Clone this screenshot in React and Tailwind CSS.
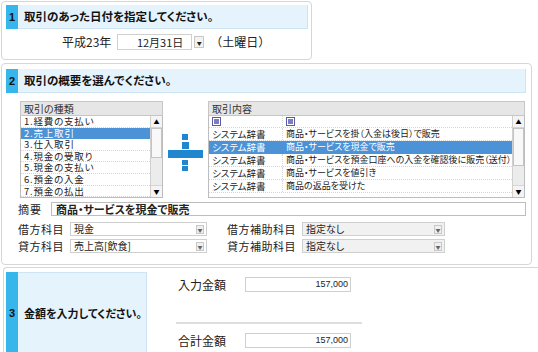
import React from 'react';

const kinds = ['1.経費の支払い', '2.売上取引', '3.仕入取引', '4.現金の受取り', '5.現金の支払い', '6.預金の入金', '7.預金の払出'];

const contents = [
  ['システム辞書', '商品・サービスを掛（入金は後日）で販売'],
  ['システム辞書', '商品・サービスを現金で販売'],
  ['システム辞書', '商品・サービスを預金口座への入金を確認後に販売（送付）'],
  ['システム辞書', '商品・サービスを値引き'],
  ['システム辞書', '商品の返品を受けた'],
];

function Header({ n, text }) {
  return (
    <div className="flex h-[24px]">
      <div className="w-[12px] bg-[#36b6ea] flex items-center justify-center text-[11px] font-bold text-[#111] font-['Liberation_Sans',sans-serif]">{n}</div>
      <div className="flex-1 bg-[#e5f3fc] border-b border-r border-[#cfe4f2] flex items-center pl-[6px] text-[11.5px] font-bold text-[#111] whitespace-nowrap">{text}</div>
    </div>
  );
}

function ScrollBar({ thumbH }) {
  return (
    <div className="w-[12px] h-full flex flex-col bg-[#ececec] border-l border-[#d0d0d0]">
      <div className="h-[12px] flex items-center justify-center bg-[#f4f4f4] border-b border-[#d6d6d6] text-[6px] leading-none text-black">▲</div>
      <div className="flex-1 flex flex-col">
        <div className="bg-[#f8f8f8] border border-[#c4c4c4]" style={{ height: thumbH }} />
      </div>
      <div className="h-[12px] flex items-center justify-center bg-[#f4f4f4] border-t border-[#d6d6d6] text-[6px] leading-none text-black">▼</div>
    </div>
  );
}

function Check() {
  return (
    <span className="inline-flex w-[9px] h-[9px] border border-[#5a5aa8] bg-white items-center justify-center">
      <span className="w-[5px] h-[5px] bg-[#7b7bc6]" />
    </span>
  );
}

function Select({ value, gray, width }) {
  return (
    <div className={`h-[14px] border border-[#cfcfcf] flex items-center justify-between pl-[3px] pr-[2px] text-[10px] leading-none text-[#222] ${gray ? 'bg-[#f1f1f1]' : 'bg-white'}`} style={{ width }}>
      <span className="whitespace-nowrap">{value}</span>
      <span className="w-[8px] h-[9px] border border-[#c8c8c8] bg-[#f0f0f0] text-[5px] leading-none flex items-center justify-center text-[#666]">▼</span>
    </div>
  );
}

function PlusIcon() {
  return (
    <svg width="36" height="38" viewBox="0 0 36 38">
      <g fill="#1f86cf">
        <rect x="14" y="1" width="6" height="6" />
        <rect x="14" y="9" width="7" height="7" />
        <rect x="0" y="17" width="35" height="8" />
        <rect x="14" y="27" width="6" height="5" />
        <rect x="14" y="33" width="6" height="5" />
      </g>
    </svg>
  );
}

export default function App() {
  return (
    <div className="w-[538px] h-[352px] overflow-hidden bg-white font-['Noto_Sans_CJK_JP','Liberation_Sans',sans-serif] [font-feature-settings:'palt'] text-[#222]">
      {/* 1 */}
      <div className="ml-[1px] mt-[1px] w-[311px] h-[59px] border border-[#d6d6d6] rounded-[4px] pt-[3px] pl-[4px] pr-[3px]">
        <Header n="1" text="取引のあった日付を指定してください。" />
        <div className="mt-[4px] h-[18px] flex items-center pl-[56px] text-[12px] whitespace-nowrap">
          <span>平成23年</span>
          <div className="ml-[6px] w-[75px] h-[16px] border border-[#d0d0d0] flex items-center justify-end pr-[8px] text-[11px]">12月31日</div>
          <div className="ml-[2px] w-[10px] h-[12px] border border-[#c8c8c8] bg-[#f2f2f2] text-[5px] leading-none flex items-center justify-center">▼</div>
          <span className="ml-[6px] [font-feature-settings:normal]">（土曜日）</span>
        </div>
      </div>

      {/* 2 */}
      <div className="ml-[1px] mt-[3px] w-[531px] h-[202px] border border-[#d6d6d6] rounded-[4px] pt-[5px] pl-[4px] pr-[5px]">
        <Header n="2" text="取引の概要を選んでください。" />
        <div className="mt-[8px] flex">
          <div className="ml-[14px] w-[143px]">
            <div className="h-[15px] bg-[#e6e6e6] border border-[#c6c6c6] pl-[3px] text-[10px] leading-[13px] text-[#333]">取引の種類</div>
            <div className="h-[82px] border border-t-0 border-[#bdbdbd] flex overflow-hidden">
              <div className="flex-1">
                {kinds.map((k, i) => (
                  <div key={k} className={`h-[11.6px] leading-[11px] pl-[3px] text-[9.5px] tracking-[0.8px] whitespace-nowrap border-b border-dotted ${i === 1 ? 'bg-[#4b92d6] text-white border-[#4b92d6]' : 'border-[#d4d4d4]'}`}>{k}</div>
                ))}
              </div>
              <ScrollBar thumbH={30} />
            </div>
          </div>
          <div className="w-[45px] flex items-center justify-center pt-[4px]">
            <PlusIcon />
          </div>
          <div className="w-[317px]">
            <div className="h-[15px] bg-[#e6e6e6] border border-[#c6c6c6] pl-[3px] text-[10px] leading-[13px] text-[#333]">取引内容</div>
            <div className="h-[82px] border border-t-0 border-[#bdbdbd] flex overflow-hidden">
              <div className="flex-1 overflow-hidden">
                <div className="h-[12px] flex border-b border-dotted border-[#d4d4d4]">
                  <div className="w-[74px] pl-[3px] flex items-center border-r border-dotted border-[#d4d4d4]"><Check /></div>
                  <div className="flex-1 pl-[3px] flex items-center"><Check /></div>
                </div>
                {contents.map(([a, b], i) => (
                  <div key={b} className={`h-[13px] flex text-[9px] leading-[12px] border-b border-dotted ${i === 1 ? 'bg-[#4b92d6] text-white border-[#4b92d6]' : 'border-[#d4d4d4]'}`}>
                    <div className={`w-[74px] pl-[3px] border-r border-dotted whitespace-nowrap text-[9.5px] ${i === 1 ? 'border-[#4b92d6]' : 'border-[#d4d4d4]'}`}>{a}</div>
                    <div className="flex-1 pl-[3px] whitespace-nowrap overflow-hidden">{b}</div>
                  </div>
                ))}
              </div>
              <ScrollBar thumbH={38} />
            </div>
          </div>
        </div>

        <div className="mt-[4px] h-[14px] flex items-center">
          <span className="ml-[12px] w-[33px] text-[11px] tracking-[1px]">摘要</span>
          <div className="w-[476px] h-[14px] border border-[#bdbdbd] pl-[4px] text-[11px] leading-[12px] font-bold whitespace-nowrap">商品・サービスを現金で販売</div>
        </div>

        <div className="mt-[6px] flex flex-col gap-[3px]">
          {[['借方科目', '現金', '借方補助科目'], ['貸方科目', '売上高[飲食]', '貸方補助科目']].map(([l, v, l2]) => (
            <div key={l} className="h-[14px] flex items-center text-[11px]">
              <span className="ml-[12px] w-[52px] tracking-[0.5px] whitespace-nowrap">{l}</span>
              <Select value={v} width={137} />
              <span className="ml-[20px] w-[75px] tracking-[0.5px] whitespace-nowrap">{l2}</span>
              <Select value="指定なし" gray width={143} />
            </div>
          ))}
        </div>
      </div>

      {/* 3 */}
      <div className="ml-[3px] mt-[2px] w-[535px] border-l border-t border-[#d6d6d6] rounded-tl-[4px] pt-[4px] pl-[2px] flex">
        <div className="w-[12px] h-[82px] bg-[#36b6ea] flex items-center justify-center text-[11px] font-bold text-[#111] font-['Liberation_Sans',sans-serif]">3</div>
        <div className="w-[129px] h-[82px] bg-[#e5f3fc] border border-l-0 border-[#cfe4f2] flex items-center pl-[6px] text-[11px] font-bold text-[#111] whitespace-nowrap">金額を入力してください。</div>
        <div className="ml-[31px] pt-[5px] flex flex-col">
          <div className="h-[15px] flex items-center">
            <span className="w-[67px] text-[12px]">入力金額</span>
            <div className="w-[106px] h-[15px] border border-[#cfcfcf] flex items-center justify-end pr-[2px] text-[9px] font-['Liberation_Sans',sans-serif]">157,000</div>
          </div>
          <div className="mt-[30px] -ml-[2px] w-[186px] h-[2px] bg-[#dedede]" />
          <div className="mt-[9px] h-[15px] flex items-center">
            <span className="w-[67px] text-[12px]">合計金額</span>
            <div className="w-[106px] h-[15px] border border-[#cfcfcf] flex items-center justify-end pr-[2px] text-[9px] font-['Liberation_Sans',sans-serif]">157,000</div>
          </div>
        </div>
      </div>
    </div>
  );
}
